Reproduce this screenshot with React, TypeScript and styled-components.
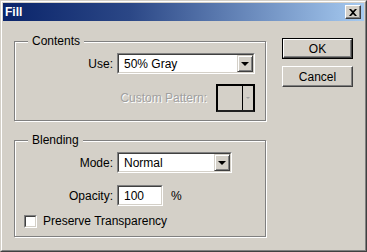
import React from "react";
import styled, { createGlobalStyle } from "styled-components";

const GlobalStyle = createGlobalStyle`
  html, body {
    margin: 0;
    padding: 0;
    background: #d4d0c8;
  }
  body {
    font-family: "Liberation Sans", Arial, sans-serif;
    font-size: 12px;
    color: #000;
  }
`;

const Window = styled.div`
  width: 367px;
  height: 252px;
  box-sizing: border-box;
  background: #d4d0c8;
  border-style: solid;
  border-width: 1px;
  border-color: #d4d0c8 #404040 #404040 #d4d0c8;
  display: flex;
  flex-direction: column;
`;

const Frame = styled.div`
  flex: 1;
  display: flex;
  flex-direction: column;
  border-style: solid;
  border-width: 1px;
  border-color: #fff #808080 #808080 #fff;
  padding: 1px;
`;

const TitleBar = styled.div`
  height: 18px;
  display: flex;
  align-items: center;
  justify-content: space-between;
  padding: 0 3px 0 2px;
  background: linear-gradient(to right, #0a246a 0%, #2b4786 35%, #a6caf0 100%);
  color: #fff;
  font-weight: bold;
  font-size: 12px;
`;

const CloseButton = styled.div`
  width: 16px;
  height: 14px;
  box-sizing: border-box;
  background: #d4d0c8;
  border-style: solid;
  border-width: 1px;
  border-color: #fff #404040 #404040 #fff;
  box-shadow: inset -1px -1px 0 #808080;
  display: flex;
  align-items: center;
  justify-content: center;
`;

const Body = styled.div`
  flex: 1;
  display: flex;
  gap: 16px;
  padding: 0 11px 0 11px;
`;

const LeftColumn = styled.div`
  width: 252px;
  display: flex;
  flex-direction: column;
  gap: 19px;
  padding-top: 20px;
`;

const RightColumn = styled.div`
  width: 71px;
  display: flex;
  flex-direction: column;
  gap: 7px;
  padding-top: 17px;
`;

const Group = styled.div<{ $pt: number; $pb: number }>`
  position: relative;
  box-sizing: border-box;
  border: 1px solid #808080;
  box-shadow: 1px 1px 0 #fff, inset 1px 1px 0 #fff;
  padding: ${(p) => p.$pt}px 10px ${(p) => p.$pb}px 8px;
  display: flex;
  flex-direction: column;
`;

const Legend = styled.span`
  position: absolute;
  top: -8px;
  left: 13px;
  padding: 0 4px;
  background: #d4d0c8;
  line-height: 14px;
`;

const FieldRow = styled.div<{ $mt?: number }>`
  display: flex;
  align-items: center;
  margin-top: ${(p) => p.$mt ?? 0}px;
`;

const FieldLabel = styled.span`
  width: 90px;
  text-align: right;
  padding-right: 4px;
  flex-shrink: 0;
`;

const Sunken = styled.div<{ $w: number; $h: number }>`
  width: ${(p) => p.$w}px;
  height: ${(p) => p.$h}px;
  box-sizing: border-box;
  border-style: solid;
  border-width: 1px;
  border-color: #808080 #fff #fff #808080;
  display: flex;
`;

const SunkenInner = styled.div<{ $bg?: string }>`
  flex: 1;
  display: flex;
  align-items: center;
  border-style: solid;
  border-width: 1px;
  border-color: #404040 #d4d0c8 #d4d0c8 #404040;
  background: ${(p) => p.$bg ?? "#fff"};
  min-width: 0;
`;

const Value = styled.span`
  flex: 1;
  padding-left: 5px;
`;

const DropButton = styled.div<{ $disabled?: boolean }>`
  width: 16px;
  align-self: stretch;
  box-sizing: border-box;
  background: #d4d0c8;
  border-style: solid;
  border-width: 1px;
  border-color: ${(p) =>
    p.$disabled ? "#d4d0c8" : "#d4d0c8 #404040 #404040 #d4d0c8"};
  box-shadow: ${(p) =>
    p.$disabled ? "none" : "inset 1px 1px 0 #fff, inset -1px -1px 0 #808080"};
  display: flex;
  align-items: center;
  justify-content: center;
`;

const Arrow = styled.div<{ $color: string; $size: number }>`
  width: 0;
  height: 0;
  border-left: ${(p) => p.$size}px solid transparent;
  border-right: ${(p) => p.$size}px solid transparent;
  border-top: ${(p) => p.$size}px solid ${(p) => p.$color};
`;

const PatternRow = styled.div`
  display: flex;
  align-items: center;
  justify-content: flex-end;
  gap: 9px;
  margin-top: 10px;
  color: #a0a0a0;
  text-shadow: 1px 1px 0 #fff;
`;

const PatternBox = styled.div`
  width: 39px;
  height: 28px;
  box-sizing: border-box;
  border: 2px solid #000;
  border-color: #000 #000 #202020 #000;
  display: flex;
  background: #d4d0c8;
`;

const PatternSwatch = styled.div`
  flex: 1;
  border-right: 1px solid #000;
`;

const PatternArrow = styled.div`
  width: 10px;
  display: flex;
  align-items: center;
  justify-content: center;
`;

const Percent = styled.span`
  margin-left: 8px;
`;

const CheckRow = styled.label`
  display: flex;
  align-items: center;
  gap: 6px;
  margin-top: 8px;
  margin-left: 1px;
`;

const CheckBox = styled.div`
  width: 13px;
  height: 13px;
  box-sizing: border-box;
  border-style: solid;
  border-width: 1px;
  border-color: #808080 #fff #fff #808080;
  display: flex;
`;

const Button = styled.div<{ $default?: boolean }>`
  height: 21px;
  box-sizing: border-box;
  border: ${(p) => (p.$default ? "1px solid #000" : "0")};
  display: flex;
`;

const ButtonFace = styled.div`
  flex: 1;
  display: flex;
  align-items: center;
  justify-content: center;
  background: #d4d0c8;
  border-style: solid;
  border-width: 1px;
  border-color: #fff #404040 #404040 #fff;
  box-shadow: inset -1px -1px 0 #808080;
`;

export default function App() {
  return (
    <>
      <GlobalStyle />
      <Window>
        <Frame>
          <TitleBar>
            <span>Fill</span>
            <CloseButton>
              <svg width="8" height="7" viewBox="0 0 8 7">
                <path
                  d="M0 0h2l2 2 2-2h2L5 3.5 8 7H6L4 5 2 7H0l3-3.5z"
                  fill="#000"
                />
              </svg>
            </CloseButton>
          </TitleBar>
          <Body>
            <LeftColumn>
              <Group $pt={11} $pb={8}>
                <Legend>Contents</Legend>
                <FieldRow>
                  <FieldLabel>Use:</FieldLabel>
                  <Sunken $w={139} $h={21}>
                    <SunkenInner>
                      <Value>50% Gray</Value>
                      <DropButton>
                        <Arrow $color="#000" $size={4} />
                      </DropButton>
                    </SunkenInner>
                  </Sunken>
                </FieldRow>
                <PatternRow>
                  <span>Custom Pattern:</span>
                  <PatternBox>
                    <PatternSwatch />
                    <PatternArrow>
                      <Arrow $color="#a0a0a0" $size={2} />
                    </PatternArrow>
                  </PatternBox>
                </PatternRow>
              </Group>
              <Group $pt={11} $pb={8}>
                <Legend>Blending</Legend>
                <FieldRow>
                  <FieldLabel>Mode:</FieldLabel>
                  <Sunken $w={115} $h={21}>
                    <SunkenInner>
                      <Value>Normal</Value>
                      <DropButton>
                        <Arrow $color="#000" $size={4} />
                      </DropButton>
                    </SunkenInner>
                  </Sunken>
                </FieldRow>
                <FieldRow $mt={12}>
                  <FieldLabel>Opacity:</FieldLabel>
                  <Sunken $w={46} $h={21}>
                    <SunkenInner>
                      <Value>100</Value>
                    </SunkenInner>
                  </Sunken>
                  <Percent>%</Percent>
                </FieldRow>
                <CheckRow>
                  <CheckBox>
                    <SunkenInner />
                  </CheckBox>
                  <span>Preserve Transparency</span>
                </CheckRow>
              </Group>
            </LeftColumn>
            <RightColumn>
              <Button $default>
                <ButtonFace>OK</ButtonFace>
              </Button>
              <Button>
                <ButtonFace>Cancel</ButtonFace>
              </Button>
            </RightColumn>
          </Body>
        </Frame>
      </Window>
    </>
  );
}
